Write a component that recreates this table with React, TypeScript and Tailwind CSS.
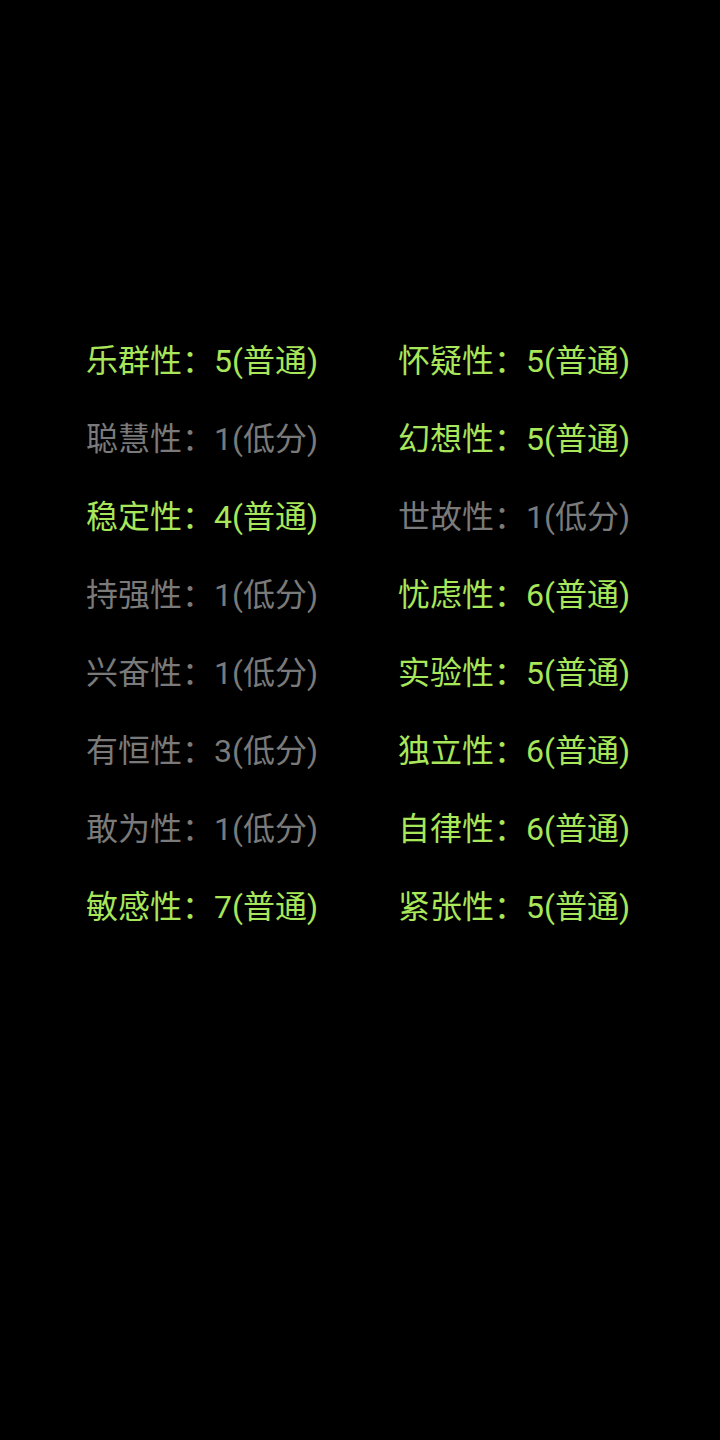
import React from 'react';

// 16PF factor scores, laid out row by row (left, right)
const factors = [
  { name: '乐群性', score: 5, level: '普通' },
  { name: '怀疑性', score: 5, level: '普通' },
  { name: '聪慧性', score: 1, level: '低分' },
  { name: '幻想性', score: 5, level: '普通' },
  { name: '稳定性', score: 4, level: '普通' },
  { name: '世故性', score: 1, level: '低分' },
  { name: '持强性', score: 1, level: '低分' },
  { name: '忧虑性', score: 6, level: '普通' },
  { name: '兴奋性', score: 1, level: '低分' },
  { name: '实验性', score: 5, level: '普通' },
  { name: '有恒性', score: 3, level: '低分' },
  { name: '独立性', score: 6, level: '普通' },
  { name: '敢为性', score: 1, level: '低分' },
  { name: '自律性', score: 6, level: '普通' },
  { name: '敏感性', score: 7, level: '普通' },
  { name: '紧张性', score: 5, level: '普通' },
];

const App = () => {
  return (
    <div className="min-h-[1440px] w-[720px] bg-black pt-[322px] pl-[86px] font-['Roboto','Noto_Sans_CJK_SC',sans-serif]">
      <div className="grid grid-cols-[312px_1fr]">
        {factors.map((f) => (
          <div
            key={f.name}
            className={
              f.level === '普通'
                ? 'h-[78px] leading-[78px] text-[32px] whitespace-nowrap text-[#a8e65a]'
                : 'h-[78px] leading-[78px] text-[32px] whitespace-nowrap text-[#7a7a7a]'
            }
          >
            {f.name}：{f.score}({f.level})
          </div>
        ))}
      </div>
    </div>
  );
};

export default App;
